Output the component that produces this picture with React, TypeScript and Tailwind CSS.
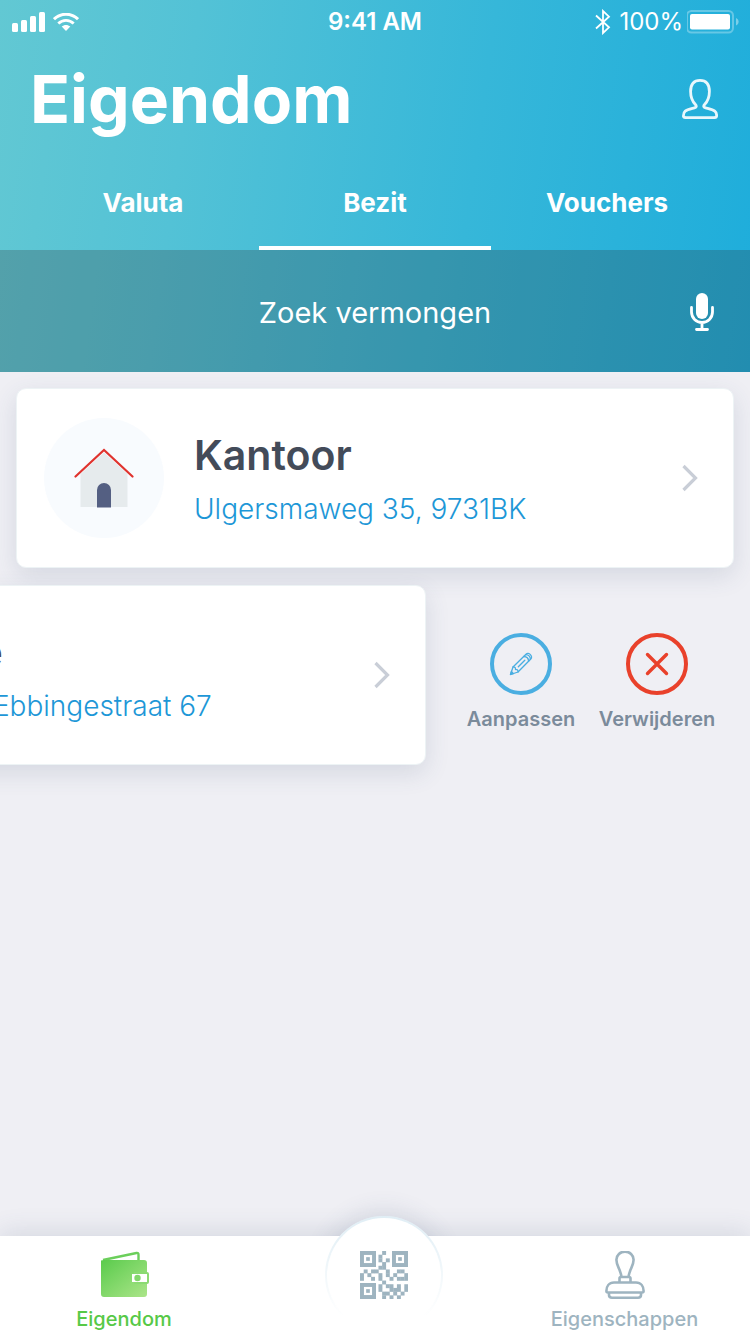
import React from "react";

function StatusBar() {
  return (
    <div className="grid h-11 grid-cols-3 items-center px-3 text-2xl leading-none">
      <div className="flex items-center gap-2">
        <svg className="h-5 w-[33px]" viewBox="0 0 33 20" fill="currentColor" aria-hidden="true">
          <rect x="0" y="11" width="6" height="9" rx="1.5" />
          <rect x="9" y="8" width="6" height="12" rx="1.5" />
          <rect x="18" y="4" width="6" height="16" rx="1.5" />
          <rect x="27" y="0" width="6" height="20" rx="1.5" />
        </svg>
        <svg className="h-[18px] w-[26px]" viewBox="0 0 26 18" aria-hidden="true">
          <path d="M1 6.2C7.8-.4 18.200-.4 25 6.200" fill="none" stroke="currentColor" strokeWidth="3" />
          <path d="M5.300 10.500C9.700 6.300 16.300 6.300 20.700 10.500" fill="none" stroke="currentColor" strokeWidth="2.800" />
          <path d="M13 18l-4.300-4.400c2.400-2.200 6.200-2.200 8.600 0z" fill="currentColor" />
        </svg>
      </div>
      <p className="text-center font-semibold">9:41 AM</p>
      <div className="flex items-center justify-end">
        <svg className="mr-2 h-[26px] w-4" viewBox="0 0 16 26" fill="none" stroke="currentColor" strokeWidth="1.800" aria-hidden="true">
          <path d="M1 6.500l13 11.800-6 5.700V2l6 5.700L1 19.500" />
        </svg>
        <span className="mr-1">100%</span>
        <svg className="-mr-0.5 h-6 w-[53px]" viewBox="1 0 53 24" aria-hidden="true">
          <rect x="1" y="1" width="46" height="21.500" rx="4.500" fill="none" stroke="currentColor" strokeOpacity=".3" strokeWidth="2" />
          <rect x="4" y="4" width="40" height="15.500" rx="2" fill="currentColor" />
          <path d="M50 8c3.500 1.500 3.500 6 0 7.500z" fill="currentColor" fillOpacity=".4" />
        </svg>
      </div>
    </div>
  );
}

const tabs = ["Valuta", "Bezit", "Vouchers"];

function Header() {
  return (
    <header className="bg-[linear-gradient(98deg,#62c8d3_0%,#53c2d6_25%,#36b7d9_62%,#1eaddb_100%)] text-white">
      <StatusBar />
      <div className="flex h-[110px] items-center justify-between pr-8 pl-[30px]">
        <h1 className="text-[66px] leading-none font-bold">Eigendom</h1>
        <button type="button" aria-label="Profiel">
          <svg className="h-10 w-9" viewBox="0 0 36 40" fill="none" stroke="currentColor" strokeOpacity=".9" strokeWidth="2.800" strokeLinejoin="round" aria-hidden="true">
            <path d="M18 1.400C11.500 1.400 8.600 6 8.600 12.500c0 5 1.700 9.800 4.800 13 1.600 1.700.8 2.900-1 3.300-3.600 1-7.200 1.700-9.200 3.300C1.400 33.500 1.400 35.500 1.400 37c.1 1.100.7 1.400 2 1.500 8 .3 21.200.3 29.200 0 1.300-.1 1.900-.4 2-1.500.1-1.500 0-3.500-1.800-4.900-2-1.600-5.600-2.300-9.200-3.300-1.800-.4-2.600-1.600-1-3.300 3.100-3.200 4.800-8 4.800-13C27.400 6 24.500 1.400 18 1.400z" />
          </svg>
        </button>
      </div>
      <nav className="grid h-24 grid-cols-3 px-[27px] text-[26px] font-bold">
        {tabs.map((tab) => (
          <a
            key={tab}
            href={`#${tab.toLowerCase()}`}
            aria-current={tab === "Bezit" ? "page" : undefined}
            className="flex items-center justify-center border-y-4 border-transparent aria-[current=page]:border-b-white"
          >
            {tab}
          </a>
        ))}
      </nav>
      <form role="search" className="flex h-[122px] items-center bg-[#303030]/25 pt-0.5 pr-8 pl-8">
        <input
          type="text"
          aria-label="Zoek vermongen"
          placeholder="Zoek vermongen"
          className="h-full min-w-0 flex-1 bg-transparent pl-8 text-center text-[29px] outline-none placeholder:text-white"
        />
        <button type="button" aria-label="Spraak" className="px-1">
          <svg className="h-10 w-6" viewBox="0 0 24 40" aria-hidden="true">
            <rect x="6" y="1" width="12" height="26" rx="6" fill="currentColor" />
            <path d="M1.500 15.500V20a10.500 10.500 0 0 0 21 0v-4.500M12 31v6M6.500 37.500h11" fill="none" stroke="currentColor" strokeWidth="2.800" strokeLinecap="round" />
          </svg>
        </button>
      </form>
    </header>
  );
}

function House() {
  return (
    <svg className="size-[60px]" viewBox="0 0 60 60" aria-hidden="true">
      <path d="M6.500 26L30 4.500 53.500 26v33h-47z" fill="#e6ebed" />
      <path d="M23 59.500V42a7 7 0 0 1 14 0v17.500z" fill="#545f82" />
      <path d="M1.500 28.500L30 2l28.500 26.500" fill="none" stroke="#e0332e" strokeWidth="2.200" strokeLinecap="round" />
    </svg>
  );
}

function PropertyCard({ name, address }: { name: string; address: string }) {
  return (
    <a
      href={`#${name.toLowerCase()}`}
      className="flex h-[180px] items-center rounded-[10px] border border-[#edf3f5] bg-white pr-[35px] pl-[27px] shadow-[0_8px_24px_rgba(60,75,110,0.14)]"
    >
      <span className="mr-[30px] flex size-[120px] shrink-0 items-center justify-center rounded-full bg-[#f8fbfe]">
        <House />
      </span>
      <span className="flex flex-1 flex-col gap-2.5 whitespace-nowrap">
        <span className="text-[41px] leading-[52px] font-semibold text-[#434b59]">{name}</span>
        <span className="text-[28px] leading-9 font-light text-[#1d97d7]">{address}</span>
      </span>
      <svg className="h-7 w-4" viewBox="0 0 16 28" fill="none" stroke="#c9ced7" strokeWidth="3.200" aria-hidden="true">
        <path d="M1.500 2l12 12-12 12" />
      </svg>
    </a>
  );
}

function RowActions() {
  return (
    <div className="ml-[27px] flex shrink-0 pt-3.5 text-xl leading-6 font-semibold text-[#7b8b9b]">
      <button type="button" className="flex w-[136px] flex-col items-center gap-3">
        <span className="flex size-[62px] items-center justify-center rounded-full border-4 border-[#4aaee1]">
          <svg className="size-6" viewBox="0 0 24 24" fill="none" stroke="#4aaee1" strokeWidth="1.300" strokeLinejoin="round" strokeLinecap="round" aria-hidden="true">
            <path d="M1.500 22.500L4 15 17 2.200c1.300-1.300 3.200-.8 4.400.4s1.700 3.100.4 4.400L9 20z" />
            <path d="M4 15c1.800-.2 2.700.7 2.500 2.500C8.300 17.300 9.200 18.200 9 20M14.800 4.500c3 .1 4.700 1.800 4.800 4.800M16.800 2.700c3 .1 4.400 1.500 4.600 4.600M9.300 14.800l6.500-6.500" />
            <path d="M1.500 22.500l.9-3 2.100 2.100z" fill="#4aaee1" />
          </svg>
        </span>
        Aanpassen
      </button>
      <button type="button" className="flex w-[136px] flex-col items-center gap-3">
        <span className="flex size-[62px] items-center justify-center rounded-full border-4 border-[#e9412b]">
          <svg className="size-6" viewBox="0 0 24 24" stroke="#e9412b" strokeWidth="3.400" strokeLinecap="round" aria-hidden="true">
            <path d="M2.500 2.500l19 19M21.500 2.500l-19 19" />
          </svg>
        </span>
        Verwijderen
      </button>
    </div>
  );
}

const qrRows = [
  "......#......",
  ".....#.......",
  ".....#.#.....",
  "......#......",
  ".....##......",
  ".#.##..#..##.",
  "#.#..#.#.#..#",
  "#..#.#..#.###",
  "......#......",
  ".....#.##.#.#",
  ".....#..###.#",
  "......##.#.#.",
  "......#.#.#..",
];

function QrCode() {
  return (
    <svg className="size-12" viewBox="0 0 39 39" fill="#9eb4c0" aria-hidden="true">
      {[[0, 0], [26, 0], [0, 26]].map(([x, y]) => (
        <g key={`${x}-${y}`}>
          <rect x={x + 1.6} y={y + 1.6} width="9.8" height="9.8" fill="none" stroke="#9eb4c0" strokeWidth="3.2" />
          <rect x={x + 5} y={y + 5} width="3" height="3" />
        </g>
      ))}
      {qrRows.map((row, y) =>
        row.split("").map((cell, x) =>
          cell === "#" ? <rect key={`${x}-${y}`} x={x * 3} y={y * 3} width="3.2" height="3.2" /> : null,
        ),
      )}
    </svg>
  );
}

function TabBar() {
  return (
    <footer className="isolate mt-auto shadow-[0_-4px_24px_rgba(60,75,110,0.14)]">
      <nav className="grid h-[98px] grid-cols-[248fr_272fr_209fr] bg-white pr-[21px] text-xl leading-6 font-medium">
        <a href="#eigendom" className="flex flex-col items-center gap-2 pt-[15px] text-[#57c947]">
          <svg className="h-12 w-[50px]" viewBox="-1 0 50 48" aria-hidden="true">
            <defs>
              <linearGradient id="wallet" x1="0" y1="0" x2="1" y2="1">
                <stop offset="0" stopColor="#5acb4c" />
                <stop offset="1" stopColor="#abe589" />
              </linearGradient>
            </defs>
            <path d="M3 9L36.500 2q2-.4 2 1.800V10" fill="none" stroke="#6bcf5b" strokeWidth="2.400" />
            <path d="M1 9.500Q2.500 8.800 5 9h39q3 0 3 3v31q0 3-3 3H4q-3 0-3-3z" fill="url(#wallet)" />
            <path d="M34 21h13q2 0 2 2v8q0 2-2 2H34z" fill="#8bda72" />
            <path d="M32 23h15v8H32z" fill="#fff" />
            <circle cx="37.500" cy="27" r="3.200" fill="#83d76c" />
          </svg>
          Eigendom
        </a>
        <div className="relative">
          <span className="absolute inset-x-0 -top-5 -z-10 mx-auto size-[118px] rounded-full shadow-[0_-4px_24px_rgba(60,75,110,0.14)]" />
          <a
            href="#scan"
            aria-label="QR-code"
            className="absolute inset-x-0 -top-5 mx-auto flex size-[118px] items-center justify-center rounded-full bg-linear-to-b from-[#e0eef5] to-white to-85% p-0.5"
          >
            <span className="flex size-full items-center justify-center rounded-full bg-white">
              <QrCode />
            </span>
          </a>
        </div>
        <a href="#eigenschappen" className="flex flex-col items-center gap-2 pt-[15px] text-[#9eb4c0]">
          <svg className="h-12 w-10" viewBox="0 0 40 48" fill="none" stroke="currentColor" strokeWidth="2.600" strokeLinejoin="round" aria-hidden="true">
            <path d="M16.500 26C15.500 18 11.400 15 11.400 8.800a8.600 8.200 0 0 1 17.200 0C28.600 15 24.500 18 23.500 26zM14.500 31v-3.500q0-1.500 1.500-1.500h8q1.500 0 1.500 1.500V31" />
            <path d="M9 31.500h22c5 0 7.600 4 7.600 8.500q0 1.500-1.500 1.500H2.900q-1.500 0-1.500-1.500c0-4.500 2.600-8.500 7.600-8.500zM4 42v2q0 2.700 3 2.700h26q3 0 3-2.700v-2" />
          </svg>
          Eigenschappen
        </a>
      </nav>
    </footer>
  );
}

export default function App() {
  return (
    <div className="flex min-h-screen flex-col overflow-x-hidden bg-[#efeff4] font-['Inter',sans-serif]">
      <Header />
      <main className="pt-4 pb-8">
        <ul className="flex flex-col gap-[17px]">
          <li className="px-4">
            <PropertyCard name="Kantoor" address="Ulgersmaweg 35, 9731BK" />
          </li>
          <li className="-ml-[292px] flex items-center">
            <div className="w-[calc(100vw-32px)] shrink-0">
              <PropertyCard name="Home" address="Nieuwe Ebbingestraat 67" />
            </div>
            <RowActions />
          </li>
        </ul>
      </main>
      <TabBar />
    </div>
  );
}
